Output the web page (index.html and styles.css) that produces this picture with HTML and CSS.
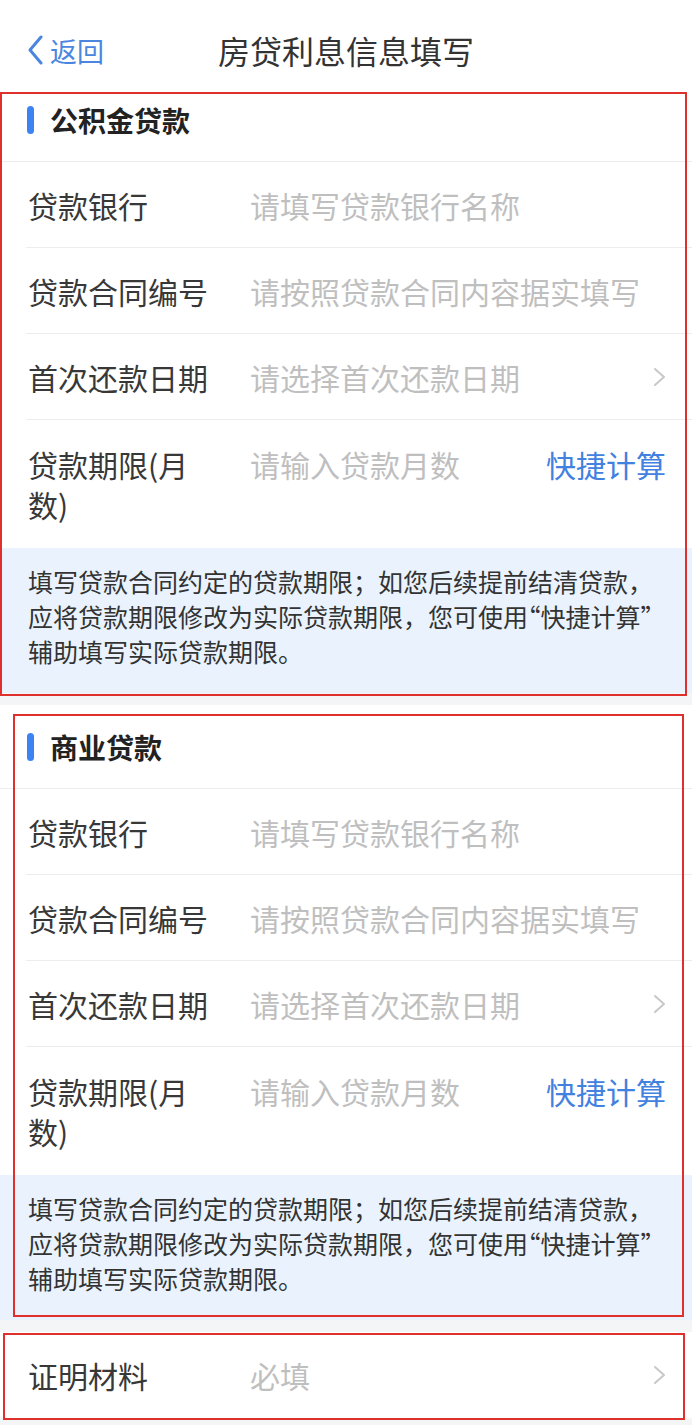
FILE: index.html
```html
<!DOCTYPE html>
<html lang="zh-CN">
<head>
<meta charset="utf-8">
<title>房贷利息信息填写</title>
<link rel="stylesheet" href="styles.css">
</head>
<body>
<div class="page">
  <header class="nav">
    <div class="back">
      <svg class="back-icon" viewBox="0 0 16 30" width="16" height="30"><path d="M14 2 L3 15 L14 28" fill="none" stroke="#4a86e0" stroke-width="3" stroke-linecap="round" stroke-linejoin="round"/></svg>
      <span class="back-text">返回</span>
    </div>
    <div class="nav-title">房贷利息信息填写</div>
    <div></div>
  </header>

  <section class="section">
    <div class="sec-head"><span class="bar"></span><span class="sec-title">公积金贷款</span></div>
    <div class="row"><div class="label">贷款银行</div><div class="value">请填写贷款银行名称</div></div>
    <div class="row"><div class="label">贷款合同编号</div><div class="value">请按照贷款合同内容据实填写</div></div>
    <div class="row"><div class="label">首次还款日期</div><div class="value">请选择首次还款日期</div>
      <svg class="chev" viewBox="0 0 13 20" width="13" height="20"><path d="M2 2 L11 10 L2 18" fill="none" stroke="#c8c8c8" stroke-width="2" stroke-linecap="round" stroke-linejoin="round"/></svg></div>
    <div class="row row-tall"><div class="label">贷款期限(月<br>数)</div><div class="value">请输入贷款月数</div><div class="link">快捷计算</div></div>
    <div class="info">填写贷款合同约定的贷款期限；如您后续提前结清贷款，<br>应将贷款期限修改为实际贷款期限，您可使用<span class="lq">“</span>快捷计算”<br>辅助填写实际贷款期限。</div>
  </section>

  <section class="section">
    <div class="sec-head"><span class="bar"></span><span class="sec-title">商业贷款</span></div>
    <div class="row"><div class="label">贷款银行</div><div class="value">请填写贷款银行名称</div></div>
    <div class="row"><div class="label">贷款合同编号</div><div class="value">请按照贷款合同内容据实填写</div></div>
    <div class="row"><div class="label">首次还款日期</div><div class="value">请选择首次还款日期</div>
      <svg class="chev" viewBox="0 0 13 20" width="13" height="20"><path d="M2 2 L11 10 L2 18" fill="none" stroke="#c8c8c8" stroke-width="2" stroke-linecap="round" stroke-linejoin="round"/></svg></div>
    <div class="row row-tall"><div class="label">贷款期限(月<br>数)</div><div class="value">请输入贷款月数</div><div class="link">快捷计算</div></div>
    <div class="info">填写贷款合同约定的贷款期限；如您后续提前结清贷款，<br>应将贷款期限修改为实际贷款期限，您可使用<span class="lq">“</span>快捷计算”<br>辅助填写实际贷款期限。</div>
  </section>

  <section class="section section-last">
    <div class="row row-plain"><div class="label">证明材料</div><div class="value">必填</div>
      <svg class="chev" viewBox="0 0 13 20" width="13" height="20"><path d="M2 2 L11 10 L2 18" fill="none" stroke="#c8c8c8" stroke-width="2" stroke-linecap="round" stroke-linejoin="round"/></svg></div>
  </section>

  <div class="mark mark-1"></div>
  <div class="mark mark-2"></div>
  <div class="mark mark-3"></div>
</div>
</body>
</html>
```
FILE: styles.css
```css
* { box-sizing: border-box; }
html, body { margin: 0; padding: 0; }
body {
  background: #f4f5f7;
  font-family: "Noto Sans CJK SC", "Noto Sans", sans-serif;
  color: #333;
}
.page {
  position: relative;
  width: 692px;
  min-height: 1425px;
}
.nav {
  height: 78px;
  padding-top: 22px;
  background: #fff;
  display: grid;
  grid-template-columns: 1fr auto 1fr;
  align-items: center;
}
.nav > * { height: 56px; display: flex; align-items: center; }
.back { padding-left: 27px; }
.back-icon { display: block; margin-right: 7px; }
.back-text { font-size: 27px; color: #4a86e0; line-height: 1; }
.nav-title { font-size: 32px; color: #333; line-height: 1; }

.section { background: #fff; margin-bottom: 12px; }
.section-last { margin-top: 3px; margin-bottom: 0; }

.sec-head {
  height: 84px;
  display: flex;
  align-items: center;
  padding-left: 27px;
  border-bottom: 1px solid #ededed;
}
.bar {
  width: 7px;
  height: 28px;
  border-radius: 4px;
  background: #3d84f2;
  margin-right: 16px;
}
.sec-title { font-size: 28px; font-weight: 700; color: #222; }

.row {
  margin-left: 26px;
  padding: 23px 26px 22px 2px;
  border-bottom: 1px solid #ededed;
  display: flex;
  align-items: flex-start;
  font-size: 30px;
  line-height: 40px;
}
.row-tall { padding-top: 24px; padding-bottom: 24px; border-bottom: none; }
.row-plain { border-bottom: none; margin-left: 0; padding-left: 28px; padding-bottom: 23px; }
.label { width: 190px; margin-right: 32px; color: #383838; flex: none; }
.value { flex: 1; color: #bfbfbf; white-space: nowrap; }
.chev { display: block; margin-top: 10px; margin-right: 0; }
.link { color: #4281e0; white-space: nowrap; }

.info {
  background: #eaf3fd;
  padding: 16px 10px 24px 28px;
  font-size: 25px;
  line-height: 35px;
  color: #333;
  white-space: nowrap;
}
.lq { font-feature-settings: "halt" 1; }

.mark {
  position: absolute;
  border: 2.5px solid #e0302e;
  pointer-events: none;
}
.mark-1 { left: 0; top: 92px; width: 687px; height: 604px; }
.mark-2 { left: 13px; top: 714px; width: 671px; height: 603px; }
.mark-3 { left: 3px; top: 1333px; width: 682px; height: 87px; }
```
